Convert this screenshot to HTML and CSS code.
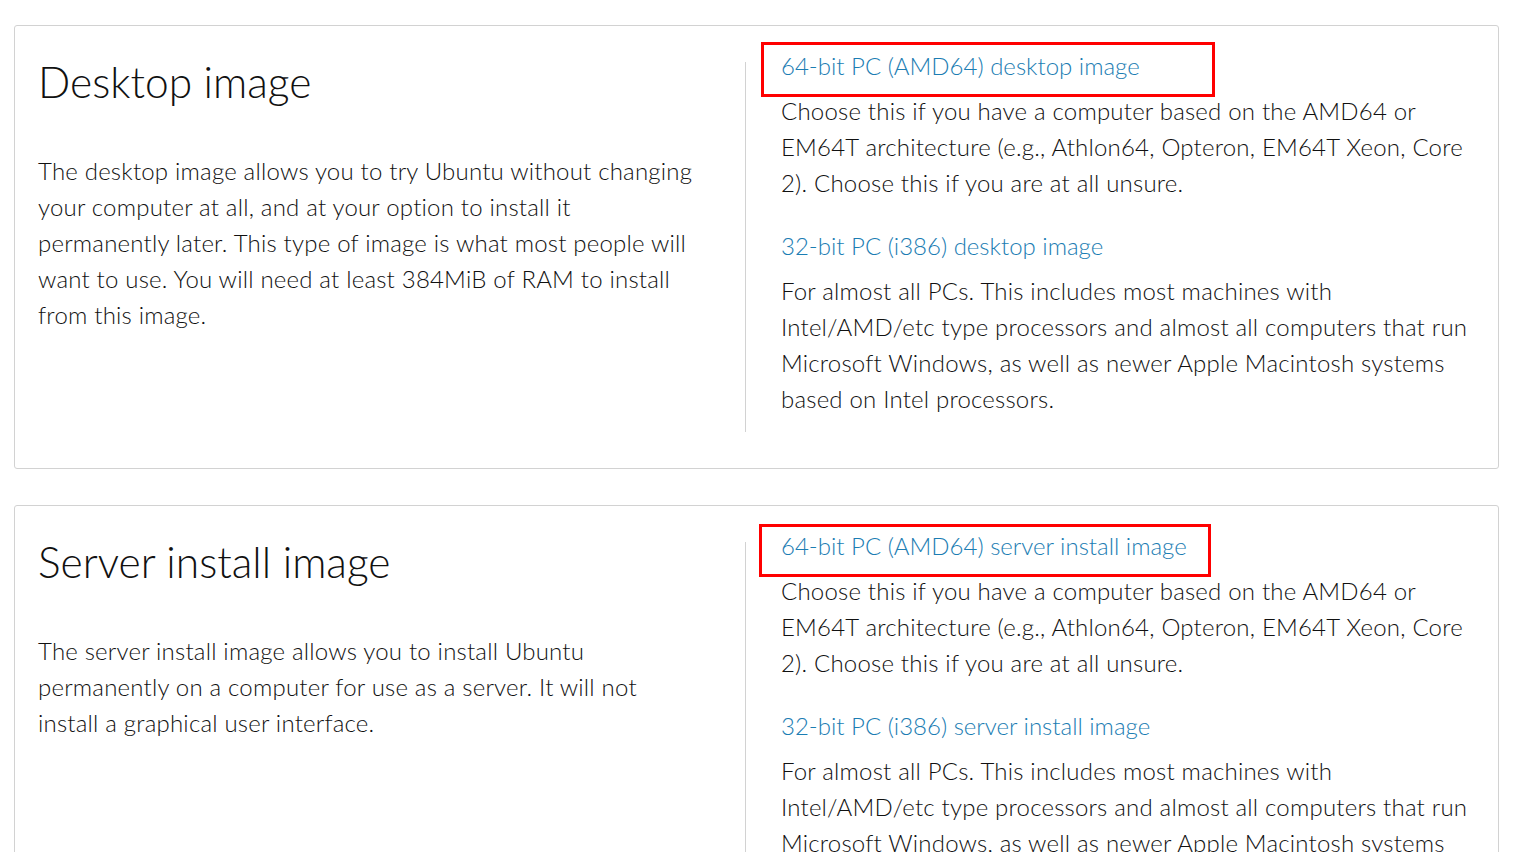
FILE: index.html
```html
<!DOCTYPE html>
<html lang="en">
<head>
<meta charset="utf-8">
<title>Ubuntu images</title>
<link rel="stylesheet" href="styles.css">
</head>
<body>
<main class="page">
  <section class="card">
    <div class="intro">
      <h2 class="intro-title">Desktop image</h2>
      <p class="text">The desktop image allows you to try Ubuntu without changing your computer at all, and at your option to install it permanently later. This type of image is what most people will want to use. You will need at least 384MiB of RAM to install from this image.</p>
    </div>
    <div class="options">
      <h3 class="opt-title"><a href="#" class="opt-link">64-bit PC (AMD64) desktop image</a><span class="mark mark-desktop"></span></h3>
      <p class="text opt-text">Choose this if you have a computer based on the AMD64 or EM64T architecture (e.g., Athlon64, Opteron, EM64T Xeon, Core 2). Choose this if you are at all unsure.</p>
      <h3 class="opt-title opt-next"><a href="#" class="opt-link">32-bit PC (i386) desktop image</a></h3>
      <p class="text opt-text">For almost all PCs. This includes most machines with Intel/AMD/etc type processors and almost all computers that run Microsoft Windows, as well as newer Apple Macintosh systems based on Intel processors.</p>
    </div>
  </section>

  <section class="card">
    <div class="intro">
      <h2 class="intro-title">Server install image</h2>
      <p class="text">The server install image allows you to install Ubuntu permanently on a computer for use as a server. It will not install a graphical user interface.</p>
    </div>
    <div class="options">
      <h3 class="opt-title"><a href="#" class="opt-link">64-bit PC (AMD64) server install image</a><span class="mark mark-server"></span></h3>
      <p class="text opt-text">Choose this if you have a computer based on the AMD64 or EM64T architecture (e.g., Athlon64, Opteron, EM64T Xeon, Core 2). Choose this if you are at all unsure.</p>
      <h3 class="opt-title opt-next"><a href="#" class="opt-link">32-bit PC (i386) server install image</a></h3>
      <p class="text opt-text">For almost all PCs. This includes most machines with Intel/AMD/etc type processors and almost all computers that run Microsoft Windows, as well as newer Apple Macintosh systems based on Intel processors.</p>
    </div>
  </section>
</main>
</body>
</html>
```

FILE: styles.css
```css
* { box-sizing: border-box; }

html, body {
  margin: 0;
  padding: 0;
  background: #ffffff;
}

body {
  font-family: "Lato", "Open Sans", "Noto Sans", sans-serif;
  font-weight: 300;
  color: #111111;
  overflow: hidden;
}

.page {
  padding: 25px 20px 0 14px;
  display: flex;
  flex-direction: column;
  gap: 36px;
}

.card {
  border: 1px solid #d2d2d2;
  border-radius: 3px;
  padding: 36px 24px 36px 24px;
  display: grid;
  grid-template-columns: 706px 1fr;
  align-items: start;
}

.intro {
  padding-right: 46px;
}

.intro-title {
  margin: -4px 0 0 -1px;
  font-size: 42.5px;
  line-height: 48px;
  font-weight: 300;
  color: #111111;
}

.text {
  font-size: 24px;
  line-height: 36px;
  letter-spacing: 0.2px;
  margin: 0;
}

.intro .text {
  margin-top: 47px;
  margin-left: -1px;
}

.options {
  border-left: 1px solid #d2d2d2;
  padding: 0 0 15px 35px;
  align-self: stretch;
}

.opt-title {
  position: relative;
  margin: -14px 0 0 0;
  font-size: 24px;
  line-height: 36px;
  font-weight: 300;
}

.opt-next {
  margin-top: 27px;
}

.opt-link {
  color: #1b7db3;
  text-decoration: none;
}

.opt-text {
  margin-top: 9px;
}

.mark {
  position: absolute;
  border: 3px solid #ff0000;
  pointer-events: none;
}

.mark-desktop {
  left: -20px;
  top: -6px;
  width: 454px;
  height: 55px;
}

.mark-server {
  left: -22px;
  top: -4px;
  width: 452px;
  height: 53px;
}
```
